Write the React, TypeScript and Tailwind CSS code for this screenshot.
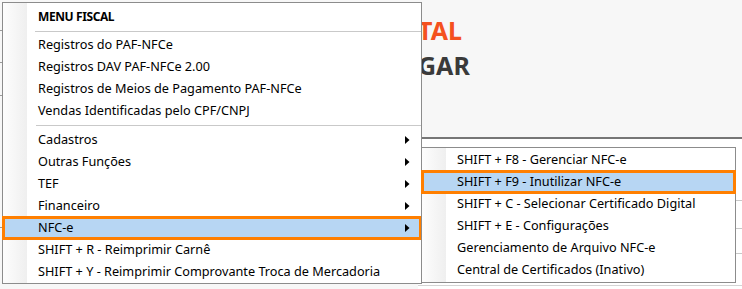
import React from "react";

const font = { fontFamily: '"Noto Sans", "Open Sans", Arial, sans-serif' };

function Arrow() {
  return (
    <svg width="5" height="8" viewBox="0 0 5 8" className="block">
      <path d="M0 0 L4.5 4 L0 8 Z" fill="#000" />
    </svg>
  );
}

type Item = { label: string; sub?: boolean; active?: boolean };

function Row({ item }: { item: Item }) {
  return (
    <div
      className={
        "flex h-[22px] items-center pl-[35px] pr-[11px] text-[12.7px] text-black " +
        (item.active
          ? "bg-[#b7d6f3] outline-[3px] outline-solid outline-[#ff7f00] outline-offset-[-2px]"
          : "")
      }
    >
      <span className="flex-1 whitespace-nowrap">{item.label}</span>
      {item.sub ? <Arrow /> : null}
    </div>
  );
}

function Sep() {
  return (
    <div className="flex py-[3px] pl-[33px]">
      <div className="h-px flex-1 bg-[#c9c9c9]" />
    </div>
  );
}

const menuBg =
  "border border-[#8c8c8c] bg-[linear-gradient(to_right,#fdfdfd_0px,#efefef_24px,#ffffff_24px)]";

export default function App() {
  const group1: Item[] = [
    { label: "Registros do PAF-NFCe" },
    { label: "Registros DAV PAF-NFCe 2.00" },
    { label: "Registros de Meios de Pagamento PAF-NFCe" },
    { label: "Vendas Identificadas pelo CPF/CNPJ" },
  ];
  const group2: Item[] = [
    { label: "Cadastros", sub: true },
    { label: "Outras Funções", sub: true },
    { label: "TEF", sub: true },
    { label: "Financeiro", sub: true },
    { label: "NFC-e", sub: true, active: true },
    { label: "SHIFT + R - Reimprimir Carnê" },
    { label: "SHIFT + Y - Reimprimir Comprovante Troca de Mercadoria" },
  ];
  const subItems: Item[] = [
    { label: "SHIFT + F8 - Gerenciar NFC-e" },
    { label: "SHIFT + F9 - Inutilizar NFC-e", active: true },
    { label: "SHIFT + C - Selecionar Certificado Digital" },
    { label: "SHIFT + E - Configurações" },
    { label: "Gerenciamento de Arquivo NFC-e" },
    { label: "Central de Certificados (Inativo)" },
  ];

  return (
    <div
      className="relative h-[289px] w-[742px] overflow-hidden bg-[#f7f7f7]"
      style={font}
    >
      {/* background page (partly hidden by the menus) */}
      <div className="flex h-full">
        {/* left edge of a table behind the menu */}
        <div className="flex w-[3px] flex-col pt-[30px]">
          <div className="h-px bg-[#9a9a9a]" />
          <div className="h-[31px]" />
          <div className="h-px bg-[#9a9a9a]" />
          <div className="h-[32px]" />
          <div className="h-px bg-[#9a9a9a]" />
          <div className="h-[131px]" />
          <div className="h-px bg-[#9a9a9a]" />
        </div>
        <div className="flex flex-1 flex-col pl-[415px]">
          <div className="flex h-[137px] flex-col pt-[13px] text-[25px] font-bold leading-[35px]">
            <span className="text-[#f4511e]">TAL</span>
            <span className="text-[#3a3a3a]">GAR</span>
          </div>
          <div className="flex flex-1 flex-col border-t-2 border-[#767676] bg-white">
            <div className="flex flex-1 justify-end pt-[61px]">
              <div className="flex w-[8px] flex-col">
                <div className="h-px bg-[#c8c8c8]" />
                <div className="h-[27px]" />
                <div className="h-px bg-[#c8c8c8]" />
                <div className="h-[24px]" />
                <div className="h-px bg-[#c8c8c8]" />
              </div>
            </div>
            <div className="mb-[3px] h-px bg-[#d4d4d4]" />
          </div>
        </div>
      </div>

      {/* main menu (overlay) */}
      <div className={"absolute left-[2px] top-[2px] w-[420px] " + menuBg}>
        <div className="flex h-[28px] items-center pl-[35px] text-[12px] font-bold tracking-[-0.4px] text-black">
          MENU FISCAL
        </div>
        <div className="ml-[32px] h-px bg-[#c9c9c9]" />
        <div className="h-[2px]" />
        {group1.map((it) => (
          <Row key={it.label} item={it} />
        ))}
        <Sep />
        {group2.map((it) => (
          <Row key={it.label} item={it} />
        ))}
      </div>

      {/* submenu (overlay) */}
      <div className={"absolute left-[421px] top-[147px] w-[315px] py-px " + menuBg}>
        {subItems.map((it) => (
          <Row key={it.label} item={it} />
        ))}
      </div>
    </div>
  );
}
